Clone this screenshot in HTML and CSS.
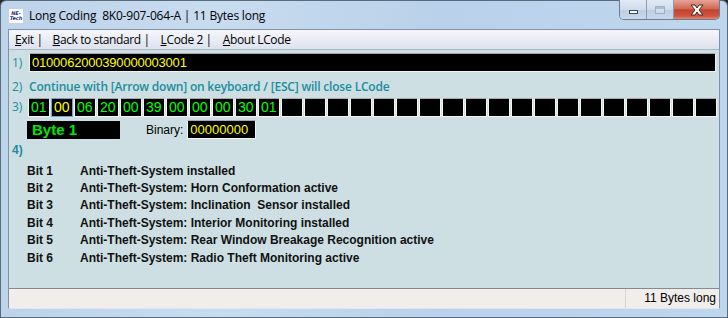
FILE: index.html
```html
<!DOCTYPE html>
<html lang="en">
<head>
    <meta charset="UTF-8">
    <title>Long Coding</title>
    <link rel="stylesheet" href="styles.css">
</head>
<body>

    <div class="window">
        <div class="titlebar">
            <div class="logo"><span>NE-</span><span>Tech</span></div>
            <div class="title">Long Coding&nbsp; 8K0-907-064-A | 11 Bytes long</div>
            <div class="controls">
                <div class="ctl ctl-min"><span class="min-bar"></span></div>
                <div class="ctl ctl-max"><span class="max-box"></span></div>
                <div class="ctl ctl-close">
                    <svg width="16" height="12" viewBox="0 0 16 12">
                        <path d="M2 1 L6 1 L8 4 L10 1 L14 1 L10 6 L14 11 L10 11 L8 8 L6 11 L2 11 L6 6 Z" fill="#fff" stroke="#4a2720" stroke-width="1" stroke-linejoin="round"/>
                    </svg>
                </div>
            </div>
        </div>

        <div class="client">
            <div class="menubar">
                <span class="menu-item"><u>E</u>xit |</span>
                <span class="menu-item"><u>B</u>ack to standard |</span>
                <span class="menu-item"><u>L</u>Code 2 |</span>
                <span class="menu-item"><u>A</u>bout LCode</span>
            </div>

            <div class="content">
                <div class="row">
                    <span class="num">1)</span>
                    <div class="code-field">0100062000390000003001</div>
                </div>

                <div class="row row-hint">
                    <span class="num">2)</span>
                    <span class="hint">Continue with [Arrow down] on keyboard / [ESC] will close LCode</span>
                </div>

                <div class="row">
                    <span class="num">3)</span>
                    <div class="cells" id="cells"></div>
                </div>

                <div class="byte-row">
                    <div class="byte-box">Byte 1</div>
                    <span class="binary-label">Binary:</span>
                    <div class="binary-box">00000000</div>
                </div>

                <div class="num num-bold">4)</div>

                <div class="bits">
                    <span>Bit 1</span><span>Anti-Theft-System installed</span>
                    <span>Bit 2</span><span>Anti-Theft-System: Horn Conformation active</span>
                    <span>Bit 3</span><span>Anti-Theft-System: Inclination&nbsp; Sensor installed</span>
                    <span>Bit 4</span><span>Anti-Theft-System: Interior Monitoring installed</span>
                    <span>Bit 5</span><span>Anti-Theft-System: Rear Window Breakage Recognition active</span>
                    <span>Bit 6</span><span>Anti-Theft-System: Radio Theft Monitoring active</span>
                </div>
            </div>

            <div class="statusbar">
                <div class="status-main"></div>
                <div class="status-cell">11 Bytes long</div>
            </div>
        </div>
    </div>

    <script>
        // Byte cells: 11 coded bytes, rest empty
        const bytes = ['01', '00', '06', '20', '00', '39', '00', '00', '00', '30', '01'];
        const cells = document.getElementById('cells');
        for (let i = 0; i < 30; i++) {
            const cell = document.createElement('div');
            cell.className = 'cell' + (i === 1 ? ' selected' : '');
            cell.textContent = bytes[i] || '';
            cells.appendChild(cell);
        }
    </script>

</body>
</html>
```

FILE: styles.css
```css
* {
    margin: 0;
    padding: 0;
    box-sizing: border-box;
}

body {
    width: 728px;
    height: 318px;
    overflow: hidden;
    background: #2b2b2b;
    font-family: "Liberation Sans", Arial, sans-serif;
}

.window {
    width: 728px;
    height: 318px;
    display: flex;
    flex-direction: column;
    background: linear-gradient(90deg, #bcd3ea 0%, #c8dcef 30%, #b9d1ea 60%, #bed6ee 100%);
    border: 1px solid #5a6b7e;
    border-radius: 6px 6px 0 0;
}

/* title bar */
.titlebar {
    height: 28px;
    display: flex;
    align-items: flex-start;
    padding-left: 7px;
    position: relative;
}

.logo {
    width: 16px;
    height: 16px;
    margin-top: 7px;
    background: #fff;
    border: 1px solid #c8d0e0;
    display: flex;
    flex-direction: column;
    align-items: center;
    justify-content: center;
    font-family: "DejaVu Sans", sans-serif;
    font-style: italic;
    font-weight: bold;
    font-size: 5px;
    line-height: 5px;
    color: #1b2f9c;
}

.title {
    margin-left: 5px;
    margin-top: 6px;
    font-family: "Open Sans", sans-serif;
    font-size: 12px;
    color: #000;
    letter-spacing: -0.2px;
}

.controls {
    position: absolute;
    top: -1px;
    right: 7px;
    display: flex;
    height: 20px;
    border: 1px solid #6d7d92;
    border-top: none;
    border-radius: 0 0 5px 5px;
    overflow: hidden;
}

.ctl {
    height: 19px;
    display: flex;
    align-items: center;
    justify-content: center;
}

.ctl-min,
.ctl-max {
    width: 27px;
    background: linear-gradient(#e2ebf5, #cfdcec 50%, #bccde3 51%, #c9d9ec);
    border-right: 1px solid #8b9bb0;
}

.min-bar {
    width: 9px;
    height: 4px;
    margin-top: 5px;
    background: #fff;
    border: 1px solid #3c4a5c;
}

.max-box {
    width: 10px;
    height: 8px;
    border: 1px solid #9fb0c4;
    background: linear-gradient(#dce6f2, #c9d7e8);
    box-shadow: inset 0 2px 0 #aebdd0;
}

.ctl-close {
    width: 45px;
    background: linear-gradient(#e6a394, #d16a56 45%, #c2432d 52%, #d0563f 85%, #e08a70);
}

/* client */
.client {
    flex: 1;
    margin: 0 7px 8px 7px;
    display: flex;
    flex-direction: column;
    border: 1px solid #7f93a8;
    border-bottom-color: #dbe7f4;
    background: #cddfe2;
}

.menubar {
    height: 20px;
    display: flex;
    align-items: center;
    padding-left: 6px;
    background: linear-gradient(#f6f7fb, #e7eaf3 60%, #dde2ee);
    border-bottom: 1px solid #aab6c4;
    font-family: "Open Sans", sans-serif;
    font-size: 12px;
    letter-spacing: -0.4px;
    color: #000;
}

.menu-item {
    margin-right: 11px;
}

.menu-item:first-child {
    margin-right: 10px;
}

.content {
    flex: 1;
    padding: 3px 3px 0 2px;
    display: flex;
    flex-direction: column;
    background: #cddfe2;
}

.row {
    display: flex;
    align-items: center;
}

.num {
    width: 18px;
    padding-left: 1px;
    font-family: "Open Sans", sans-serif;
    font-size: 12px;
    color: #1c8da0;
    flex-shrink: 0;
}

.num-bold {
    font-family: "Liberation Sans", Arial, sans-serif;
    font-weight: bold;
    margin-top: 4px;
    height: 14px;
    line-height: 14px;
}

.code-field {
    flex: 1;
    height: 19px;
    background: #000;
    border: 1px solid #f2f2f2;
    border-top-color: #a9a9a9;
    color: #ffff00;
    font-size: 13px;
    line-height: 17px;
    padding-left: 2px;
    letter-spacing: -0.2px;
}

.row-hint {
    margin-top: 5px;
    height: 19px;
}

.hint {
    font-family: "Open Sans", sans-serif;
    font-size: 12px;
    font-weight: 600;
    color: #1c8da0;
    letter-spacing: -0.2px;
}

.cells {
    margin-top: 2px;
    margin-left: -1px;
    display: flex;
    gap: 1px;
}

.cell {
    width: 22px;
    height: 19px;
    background: #000;
    border: 1px solid #f4f4f4;
    border-top-color: #a9a9a9;
    color: #00ff00;
    font-size: 14px;
    line-height: 17px;
    padding-left: 2px;
}

.cell.selected {
    color: #ffff00;
    border-color: #7aa1cf;
}

.byte-row {
    margin-top: 3px;
    padding-left: 16px;
    display: flex;
    align-items: center;
    height: 19px;
}

.byte-box {
    width: 93px;
    height: 18px;
    background: #000;
    color: #00e600;
    font-weight: bold;
    font-size: 15px;
    line-height: 18px;
    padding-left: 5px;
}

.binary-label {
    margin-left: 26px;
    font-size: 12px;
    color: #000;
}

.binary-box {
    margin-left: 4px;
    width: 69px;
    height: 19px;
    background: #000;
    border: 1px solid #f4f4f4;
    border-top-color: #a9a9a9;
    color: #ffff00;
    font-size: 13px;
    line-height: 17px;
    padding-left: 2px;
}

.bits {
    margin-top: 5px;
    padding-left: 16px;
    display: grid;
    grid-template-columns: 53px auto;
    grid-auto-rows: 17.4px;
    align-items: center;
    font-size: 12px;
    font-weight: bold;
    color: #111;
}

/* status bar */
.statusbar {
    height: 20px;
    display: flex;
    background: #f0edeb;
    border-top: 1px solid #868b91;
    font-size: 12px;
    color: #000;
}

.status-main {
    flex: 1;
    border-right: 1px solid #d8d4d0;
}

.status-cell {
    width: 93px;
    text-align: right;
    padding-right: 3px;
    line-height: 19px;
}
```
